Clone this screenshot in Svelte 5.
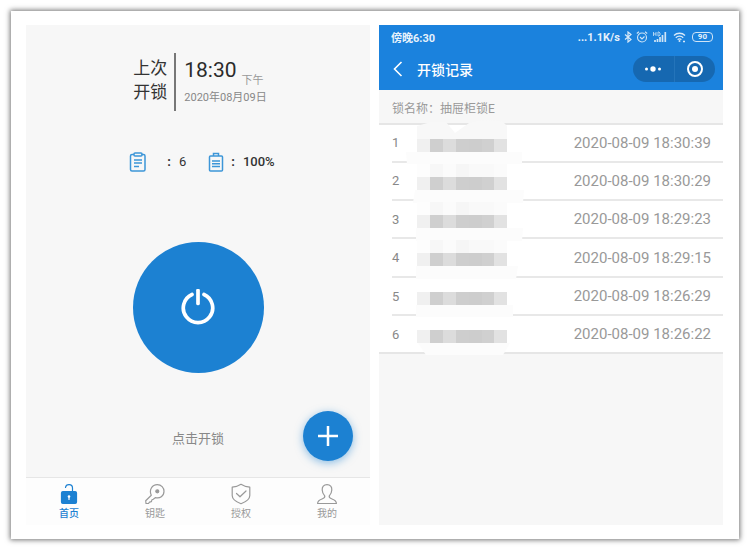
<script>
  const records = [
    {
      id: 1,
      time: "2020-08-09 18:30:39",
      smear: "0,27 116,27 116,39 1,39",
    },
    {
      id: 2,
      time: "2020-08-09 18:30:29",
      smear: "9,27 118,27 117,40 7,40",
    },
    {
      id: 3,
      time: "2020-08-09 18:29:23",
      smear: "10,27 117,27 116,40 10,40",
    },
    {
      id: 4,
      time: "2020-08-09 18:29:15",
      smear: "10,27 112,27 110,40 10,40",
    },
    {
      id: 5,
      time: "2020-08-09 18:26:29",
      smear: "10,27 107,27 107,39 10,39",
    },
    {
      id: 6,
      time: "2020-08-09 18:26:22",
      smear: "12,27 104,27 97,39 20,39",
    },
  ];

  // greyed-out member names, one block per column
  const blocks = [
    { x: 11, w: 13, fill: "#f0f0f0", top: "#fdfdfd" },
    { x: 24, w: 13, fill: "#cfcfcf", top: "#f7f7f7" },
    { x: 37, w: 13, fill: "#dcdcdc", top: "#fbfbfb" },
    { x: 50, w: 13, fill: "#cecece", top: "#f6f6f6" },
    { x: 63, w: 13, fill: "#cdcdcd", top: "#f9f9f9" },
    { x: 76, w: 12, fill: "#d0d0d0", top: "#f9f9f9" },
    { x: 88, w: 13, fill: "#e2e2e2", top: "#fbfbfb" },
  ];

  const tabs = [
    { id: "home", label: "首页" },
    { id: "key", label: "钥匙" },
    { id: "auth", label: "授权" },
    { id: "mine", label: "我的" },
  ];

  let active = $state("home");
</script>

<svelte:head>
  <title>开锁记录</title>
</svelte:head>

<div class="sheet">
  <section class="phone home">
    <div class="last">
      <div class="last-title">上次<br />开锁</div>
      <div class="last-info">
        <div class="clock">18:30<small>下午</small></div>
        <div class="date">2020年08月09日</div>
      </div>
    </div>

    <div class="stats">
      <div class="stat records-stat">
        <svg width="18" height="20" viewBox="0 0 18 20" fill="none" stroke="#3d96d8" stroke-width="1.5">
          <path d="M5 2.500H3a1.500 1.500 0 0 0-1.500 1.500v13.500A1.500 1.500 0 0 0 3 19h11.500a1.500 1.500 0 0 0 1.500-1.500V4a1.500 1.500 0 0 0-1.500-1.500h-2" />
          <rect x="5" y="1" width="8" height="3" rx="1" />
          <path d="M5 8h8M5 11h8M5 14.500h5" />
        </svg>
        <span class="colon">:</span>
        <span>6</span>
      </div>
      <div class="stat battery-stat">
        <svg width="16" height="20" viewBox="0 0 16 20" fill="none" stroke="#3d96d8" stroke-width="1.5">
          <path d="M5.500 4V1.500h5V4" />
          <rect x="1.500" y="4" width="13" height="15" rx="1" />
          <path d="M4 9h8M4 11.800h8M4 14.500h8" />
        </svg>
        <span class="colon">:</span>
        <b>100%</b>
      </div>
    </div>

    <button class="unlock" aria-label="点击开锁">
      <svg width="36" height="38" viewBox="0 0 36 38" fill="none" stroke="#fff" stroke-width="3.700" stroke-linecap="round">
        <path d="M12 5.500A14.700 14.700 0 1 0 24 5.500" />
        <path d="M18 1.500v13" />
      </svg>
    </button>
    <p class="hint">点击开锁</p>

    <button class="fab" aria-label="添加">
      <svg width="22" height="22" viewBox="0 0 22 22" stroke="#fff" stroke-width="2.500">
        <path d="M11 1v20M1 11h20" />
      </svg>
    </button>

    <nav class="tabs">
      {#each tabs as tab (tab.id)}
        <button class="tab" class:active={active === tab.id} onclick={() => (active = tab.id)}>
          <svg width="22" height="22" viewBox="0 0 22 22" fill="none" stroke="currentColor" stroke-width="1.2" stroke-linejoin="round" stroke-linecap="round">
            {#if tab.id === "home"}
              <path d="M7.500 4.500C8 .5 14.500.5 14.500 5v4" />
              <rect x="3.500" y="8.500" width="15" height="12" rx="1.500" fill="currentColor" />
              <circle cx="11" cy="13.500" r="1.300" fill="#fff" stroke="none" />
              <path d="M11 14v2.500" stroke="#fff" />
            {:else if tab.id === "key"}
              <path d="M7.300 12.300C4.800 7 8 1.700 13.300 1.700c4 0 6.700 3 6.700 6.600 0 4.700-4.200 7.700-8.700 6.300l-2 1.700-1.300.4-.6 2-1.900.4-1 1.400H2l-.3-2.700z" />
              <circle cx="13.300" cy="8.300" r="1.500" fill="currentColor" />
            {:else if tab.id === "auth"}
              <path d="M11 1.300c2.800 1.800 5.600 2.600 8.800 2.900v8.300c0 4-4.300 6.500-8.800 8.200-4.500-1.700-8.800-4.200-8.800-8.200V4.200C5.400 3.900 8.200 3.100 11 1.300z" />
              <path d="M6.500 10.500l3.500 3.300L16 8" />
            {:else}
              <path d="M11 1.700c-3.300 0-5 2.300-4.800 5.300.1 2.500 1 4.300 2.500 5.800.5 1.600-.5 2.400-2.200 3-2.500.9-4.900 1.500-4.900 4.700h18.800c0-3.200-2.400-3.800-4.900-4.700-1.700-.6-2.700-1.400-2.200-3 1.500-1.500 2.400-3.300 2.500-5.800.2-3-1.500-5.300-4.800-5.300z" />
            {/if}
          </svg>
          <span>{tab.label}</span>
        </button>
      {/each}
    </nav>
  </section>

  <section class="phone log">
    <header>
      <div class="status">
        <span>傍晚6:30</span>
        <div class="status-right">
          <span class="speed">...1.1K/s</span>
          <svg width="8" height="12" viewBox="0 0 8 12" fill="none" stroke="#d8e9f8" stroke-width="1.2">
            <path d="M1 3.500l6 5-3 2.500V1l3 2.500-6 5" />
          </svg>
          <svg width="12" height="12" viewBox="0 0 12 12" fill="none" stroke="#cfe4f6" stroke-width="1.1">
            <circle cx="6" cy="6.500" r="4.500" />
            <path d="M4 6l2 2 2.500-2.500M.8 2.500L3 .8M11.200 2.500L9 .8" />
          </svg>
          <svg width="15" height="12" viewBox="0 0 15 12" fill="none" stroke="#cfe4f6">
            <path d="M1.500 1v4M4 1v4M1.500 3H4M6 1v4h1l1-1V2L7 1z" stroke-width=".8" />
            <path d="M3 11V9M5.500 11V8M8 11V6M10.500 11V4M13.300 11V1" stroke-width="1.700" />
          </svg>
          <svg class="wifi" width="13" height="12" viewBox="0 0 13 12" fill="none" stroke="#d8e9f8" stroke-width="1.3">
            <path d="M1 4.500c3-3 8-3 11 0M2.800 6.700c2-2.200 5.400-2.200 7.400 0M4.600 8.700c1-1.200 2.800-1.200 3.800 0" />
            <circle cx="6.500" cy="10" r="1" fill="#d8e9f8" stroke="none" />
            <path d="M10 10.500h2" />
          </svg>
          <span class="battery">90</span>
        </div>
      </div>
      <div class="bar">
        <button class="back" aria-label="返回">
          <svg width="10" height="16" viewBox="0 0 10 16" fill="none" stroke="#fff" stroke-width="1.600">
            <path d="M8.500 1L1.500 8l7 7" />
          </svg>
        </button>
        <h1>开锁记录</h1>
        <div class="capsule">
          <button aria-label="更多">
            <svg width="18" height="8" viewBox="0 0 18 8" fill="#fff">
              <circle cx="2.500" cy="4" r="1.500" />
              <circle cx="9" cy="4" r="2.700" />
              <circle cx="15.500" cy="4" r="1.500" />
            </svg>
          </button>
          <button aria-label="关闭">
            <svg width="18" height="18" viewBox="0 0 18 18" fill="none">
              <circle cx="9" cy="9" r="7" stroke="#fff" stroke-width="2" />
              <circle cx="9" cy="9" r="3" fill="#fff" />
            </svg>
          </button>
        </div>
      </div>
    </header>

    <p class="lock-name">锁名称：抽屉柜锁E</p>

    <div class="list">
      <table>
        <tbody>
          {#each records as record (record.id)}
            <tr>
              <td class="no">{record.id}</td>
              <td class="member">
                <svg class="mosaic" width="118" height="40" viewBox="0 0 118 40">
                  {#if record.id === 1}
                    <path d="M11 1l14-4h15l9 11 14-10q17-5 34-1l4 4v13H11z" fill="#f8f8f8" />
                  {/if}
                  {#each blocks as block}
                    {#if record.id < 5 && record.id > 1}
                      <rect x={block.x} y="1" width={block.w} height="13" fill={block.top} />
                    {/if}
                    <rect x={block.x} y="14" width={block.w} height="13" fill={block.fill} />
                  {/each}
                  <polygon points={record.smear} fill="#fcfcfc" />
                </svg>
              </td>
              <td class="time">{record.time}</td>
            </tr>
          {/each}
        </tbody>
      </table>
    </div>
  </section>
</div>

<style>
  :global(body) {
    background: #fff;
    font-family: Roboto, "Noto Sans CJK SC", sans-serif;
  }

  button {
    padding: 0;
    border: none;
    background: none;
    font: inherit;
    color: inherit;
    cursor: pointer;
  }

  svg {
    display: block;
    flex: none;
  }

  .sheet {
    display: grid;
    grid-template-columns: 1fr 1fr;
    gap: 9px;
    margin: 11px;
    padding: 14px 16px 14px 15px;
    background: #fff;
    box-shadow: 0 0 5px 1px rgba(0, 0, 0, 0.55);
  }

  .phone {
    position: relative;
    display: flex;
    flex-direction: column;
    min-height: 500px;
    background: #f7f7f7;
  }

  .home {
    align-items: center;
  }

  .last {
    display: flex;
    margin-top: 28px;
    padding-left: 4px;
  }

  .last-title {
    height: 55px;
    padding: 3px 7px 0 0;
    border-right: 2px solid #777;
    font-size: 17px;
    line-height: 24px;
    color: #333;
  }

  .last-info {
    padding-left: 8px;
  }

  .clock {
    display: flex;
    align-items: flex-end;
    font-size: 21px;
    line-height: 34px;
    color: #2b2b2b;
  }

  small {
    margin-left: 5px;
    font-size: 11px;
    line-height: 12px;
    color: #999;
  }

  .date {
    font-size: 11px;
    line-height: 22px;
    color: #888;
  }

  .stats {
    display: flex;
    gap: 22px;
    margin-top: 41px;
    padding-left: 8px;
  }

  .stat {
    display: flex;
    align-items: center;
    font-size: 13px;
    line-height: 20px;
    color: #333;
  }

  .stat b {
    font-weight: 500;
  }

  .colon {
    font-weight: 700;
  }

  .records-stat .colon {
    margin: 0 8px 0 20px;
  }

  .battery-stat .colon {
    margin: 0 8px 0 7px;
  }

  .unlock {
    display: flex;
    align-items: center;
    justify-content: center;
    width: 131px;
    height: 131px;
    margin-top: 70px;
    border-radius: 50%;
    background: #1c81d2;
  }

  .hint {
    margin: 56px 0 0;
    font-size: 13px;
    line-height: 20px;
    color: #888;
  }

  .fab {
    position: absolute;
    right: 17px;
    bottom: 64px;
    display: flex;
    align-items: center;
    justify-content: center;
    width: 50px;
    height: 50px;
    border-radius: 50%;
    background: #1c81d2;
    box-shadow: 0 2px 8px rgba(28, 129, 210, 0.5);
  }

  .tabs {
    display: flex;
    align-self: stretch;
    margin-top: auto;
    border-top: 1px solid #e6e6e6;
    background: #fdfdfd;
  }

  .tab {
    display: flex;
    flex: 1;
    flex-direction: column;
    align-items: center;
    height: 47px;
    padding-top: 5px;
    font-size: 10px;
    line-height: 18px;
    color: #999;
  }

  .active {
    font-weight: 500;
    color: #1c81d2;
  }

  header {
    height: 65px;
    background: #1b82dd;
    color: #fff;
  }

  .status {
    display: flex;
    align-items: center;
    justify-content: space-between;
    height: 24px;
    padding: 0 10px 0 12px;
    font-size: 11px;
    font-weight: 700;
    color: #e6f1fb;
  }

  .status-right {
    display: flex;
    align-items: center;
    gap: 4px;
  }

  .wifi {
    margin: 0 2px;
  }

  .battery {
    padding: 0 5px;
    border: 1px solid #cfe4f6;
    border-radius: 4px;
    font-size: 8px;
    line-height: 8px;
  }

  .bar {
    display: flex;
    align-items: center;
    height: 40px;
    padding: 0 8px 0 14px;
  }

  h1 {
    flex: 1;
    margin: 0 0 0 14px;
    font-size: 14px;
    font-weight: 500;
  }

  .capsule {
    display: flex;
    width: 82px;
    height: 26px;
    border-radius: 13px;
    background: #1668b1;
  }

  .capsule button {
    display: flex;
    flex: 1;
    align-items: center;
    justify-content: center;
  }

  .capsule button + button {
    border-left: 1px solid #2474ba;
  }

  .lock-name {
    margin: 0;
    padding: 5px 13px 0;
    font-size: 12px;
    line-height: 28px;
    color: #999;
  }

  .list {
    padding-left: 13px;
    border-top: 2px solid #e6e6e6;
    border-bottom: 2px solid #e6e6e6;
    background: #fff;
  }

  table {
    width: 100%;
    height: 227px;
    border-collapse: collapse;
  }

  td {
    padding: 0;
    border-bottom: 2px solid #e8e8e8;
    vertical-align: middle;
  }

  tr:last-child td {
    border-bottom: none;
  }

  .no {
    width: 14px;
    font-size: 13px;
    color: #888;
  }

  .member {
    position: relative;
  }

  .mosaic {
    position: absolute;
    top: 0;
    left: 0;
    overflow: visible;
  }

  .time {
    padding-right: 12px;
    font-size: 15px;
    text-align: right;
    color: #999;
  }
</style>
